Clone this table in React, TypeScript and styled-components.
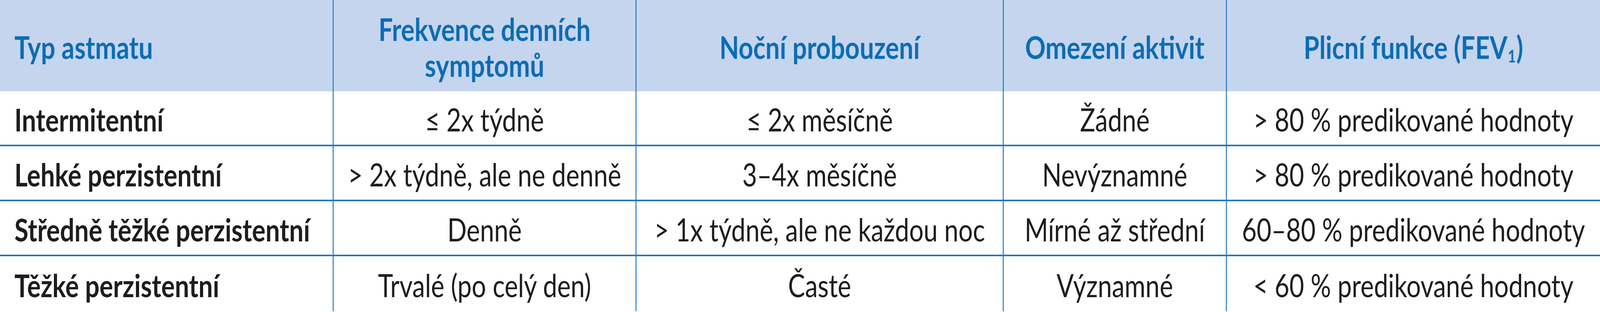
import React, { useState } from "react";
import styled, { createGlobalStyle } from "styled-components";

const DESIGN_WIDTH = 5098;

const Global = createGlobalStyle`
  html, body { margin: 0; padding: 0; background: #ffffff; overflow: hidden; }
  body { font-family: Lato, "Open Sans", "DejaVu Sans", sans-serif; }
  * { box-sizing: border-box; }
`;

const BLUE_TEXT = "#0c6db4";
const LINE = "#1f77be";

const Frame = styled.div`
  width: ${DESIGN_WIDTH}px;
  height: 800px;
  transform-origin: left top;
`;

const Table = styled.div`
  width: 100%;
  display: grid;
  grid-template-columns: 1060fr 965fr 1170fr 711fr 1192fr;
  grid-template-rows: 234px repeat(4, 141px);
  color: #1d1d1b;
`;

const HeaderCell = styled.div<{ $first?: boolean }>`
  background: #c6d5ee;
  color: ${BLUE_TEXT};
  font-weight: 700;
  font-size: 81px;
  line-height: 92px;
  display: flex;
  align-items: center;
  justify-content: ${(p) => (p.$first ? "flex-start" : "center")};
  text-align: ${(p) => (p.$first ? "left" : "center")};
  padding: ${(p) => (p.$first ? "6px 0 0 46px" : "6px 20px 0")};
  border-left: ${(p) => (p.$first ? "none" : `3px solid ${LINE}`)};
`;

const Cell = styled.div<{ $first?: boolean; $last?: boolean }>`
  font-size: 81px;
  font-weight: ${(p) => (p.$first ? 700 : 400)};
  line-height: 1;
  white-space: nowrap;
  display: flex;
  align-items: center;
  justify-content: ${(p) => (p.$first ? "flex-start" : "center")};
  padding: ${(p) => (p.$first ? "6px 0 0 46px" : "6px 0 0 0")};
  border-left: ${(p) => (p.$first ? "none" : `3px solid ${LINE}`)};
  border-bottom: ${(p) => (p.$last ? "none" : `4px solid ${LINE}`)};
`;

const Sub = styled.sub`
  font-size: 0.55em;
  vertical-align: -0.2em;
  line-height: 0;
  margin: 0 0.03em 0 0.02em;
`;

const headers: React.ReactNode[] = [
  "Typ astmatu",
  <>Frekvence denních<br />symptomů</>,
  "Noční probouzení",
  "Omezení aktivit",
  <>Plicní funkce (FEV<Sub>1</Sub>)</>,
];

const rows: string[][] = [
  ["Intermitentní", "≤ 2x týdně", "≤ 2x měsíčně", "Žádné", "> 80 % predikované hodnoty"],
  ["Lehké perzistentní", "> 2x týdně, ale ne denně", "3–4x měsíčně", "Nevýznamné", "> 80 % predikované hodnoty"],
  ["Středně těžké perzistentní", "Denně", "> 1x týdně, ale ne každou noc", "Mírné až střední", "60–80 % predikované hodnoty"],
  ["Těžké perzistentní", "Trvalé (po celý den)", "Časté", "Významné", "< 60 % predikované hodnoty"],
];

export default function App() {
  const [scale] = useState(() =>
    typeof window === "undefined" ? 1 : Math.min(1, window.innerWidth / DESIGN_WIDTH)
  );
  return (
    <>
      <Global />
      <Frame style={{ transform: `scaleX(${scale})` }}>
        <Table>
          {headers.map((h, i) => (
            <HeaderCell key={`h${i}`} $first={i === 0}>
              <span>{h}</span>
            </HeaderCell>
          ))}
          {rows.map((r, ri) =>
            r.map((c, ci) => (
              <Cell key={`${ri}-${ci}`} $first={ci === 0} $last={ri === rows.length - 1}>
                {c}
              </Cell>
            ))
          )}
        </Table>
      </Frame>
    </>
  );
}
